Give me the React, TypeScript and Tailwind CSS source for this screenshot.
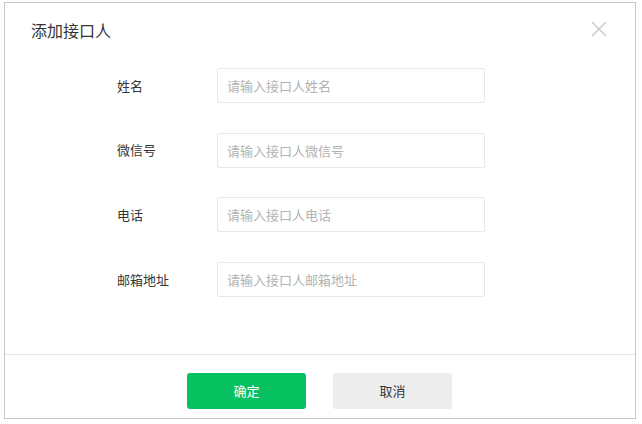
const fields = [
  { label: "姓名", placeholder: "请输入接口人姓名" },
  { label: "微信号", placeholder: "请输入接口人微信号" },
  { label: "电话", placeholder: "请输入接口人电话" },
  { label: "邮箱地址", placeholder: "请输入接口人邮箱地址" },
];

const font = { fontFamily: '"Noto Sans CJK SC", "Noto Sans", sans-serif' };

export default function App() {
  return (
    <div className="pl-[4px] pt-[2px] bg-white w-[642px] h-[424px]" style={font}>
      <div className="w-[632px] h-[417px] border border-[#c6c6c6] bg-white flex flex-col">
        {/* header */}
        <div className="h-[56px] flex items-start justify-between pl-[26px] pr-[28px]">
          <h2 className="pt-[16px] text-[16px] leading-[22px] text-[#353535]">添加接口人</h2>
          <button className="mt-[18px] w-[16px] h-[16px] flex items-center justify-center">
            <svg width="16" height="16" viewBox="0 0 16 16" fill="none" stroke="#c8c8c8" strokeWidth="1.4">
              <path d="M1 1L15 15M15 1L1 15" />
            </svg>
          </button>
        </div>

        {/* form */}
        <div className="flex-1 pt-[9px] pl-[112px] flex flex-col gap-[29.6px]">
          {fields.map((f) => (
            <div key={f.label} className="flex items-center h-[35px]">
              <label className="w-[100px] text-[13px] text-[#353535]">{f.label}</label>
              <input
                className="w-[268px] h-[35px] border border-[#e8e8e8] rounded-[2px] px-[9px] text-[13px] text-[#353535] outline-none placeholder:text-[#b2b2b2]"
                placeholder={f.placeholder}
              />
            </div>
          ))}
        </div>

        {/* footer */}
        <div className="h-[64px] border-t border-[#e7e7e7] pt-[18px] pr-[1px] flex justify-center gap-[27px]">
          <button className="w-[119px] h-[36px] rounded-[3px] bg-[#07c160] text-white text-[13px]">确定</button>
          <button className="w-[119px] h-[36px] rounded-[3px] bg-[#ededed] text-[#353535] text-[13px]">取消</button>
        </div>
      </div>
    </div>
  );
}
